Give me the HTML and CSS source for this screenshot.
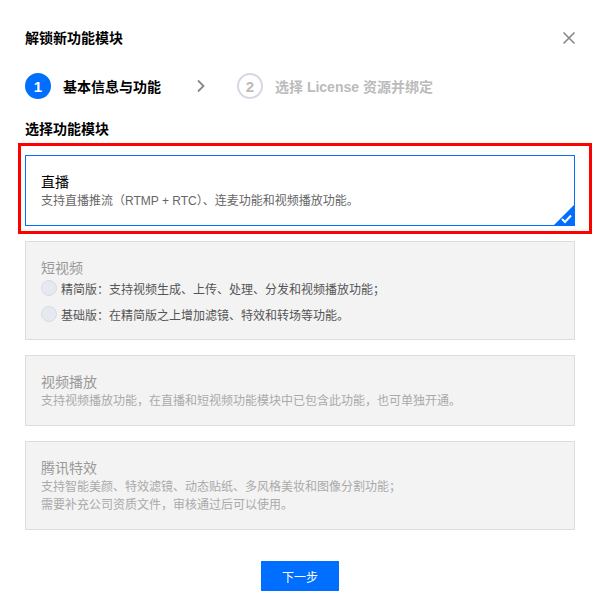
FILE: index.html
```html
<!DOCTYPE html>
<html lang="zh-CN">
<head>
    <meta charset="UTF-8">
    <meta name="viewport" content="width=device-width, initial-scale=1.0">
    <title>解锁新功能模块</title>
    <link rel="stylesheet" href="styles.css">
</head>
<body>
    <div class="dialog">
        <div class="dialog-header">
            <h3 class="dialog-title">解锁新功能模块</h3>
            <button class="close" aria-label="关闭">
                <svg width="14" height="14" viewBox="0 0 14 14">
                    <path d="M1.5 1.5 L12.5 12.5 M12.5 1.5 L1.5 12.5" stroke="#888" stroke-width="1.6" fill="none"/>
                </svg>
            </button>
        </div>

        <div class="steps">
            <div class="step current">
                <span class="step-num">1</span>
                <span class="step-label">基本信息与功能</span>
            </div>
            <svg class="step-arrow" width="10" height="14" viewBox="0 0 10 14">
                <path d="M2 1.5 L7.5 7 L2 12.5" stroke="#888" stroke-width="1.8" fill="none"/>
            </svg>
            <div class="step">
                <span class="step-num">2</span>
                <span class="step-label">选择 License 资源并绑定</span>
            </div>
        </div>

        <div class="section-label">选择功能模块</div>

        <div class="highlight">
            <div class="module selected">
                <div class="module-title">直播</div>
                <div class="module-desc">支持直播推流（RTMP + RTC）、连麦功能和视频播放功能。</div>
                <svg class="check" width="20" height="20" viewBox="0 0 20 20">
                    <path d="M20 0 L20 20 L0 20 Z" fill="#006eff"/>
                    <path d="M8 14 L11 17 L17 10.5" stroke="#fff" stroke-width="2" fill="none"/>
                </svg>
            </div>
        </div>

        <div class="module disabled">
            <div class="module-title">短视频</div>
            <label class="option"><span class="radio"></span>精简版：支持视频生成、上传、处理、分发和视频播放功能；</label>
            <label class="option"><span class="radio"></span>基础版：在精简版之上增加滤镜、特效和转场等功能。</label>
        </div>

        <div class="module disabled">
            <div class="module-title">视频播放</div>
            <div class="module-desc">支持视频播放功能，在直播和短视频功能模块中已包含此功能，也可单独开通。</div>
        </div>

        <div class="module disabled">
            <div class="module-title">腾讯特效</div>
            <div class="module-desc">支持智能美颜、特效滤镜、动态贴纸、多风格美妆和图像分割功能；<br>需要补充公司资质文件，审核通过后可以使用。</div>
        </div>

        <div class="footer">
            <button class="btn-primary">下一步</button>
        </div>
    </div>
</body>
</html>
```

FILE: styles.css
```css
body {
    margin: 0;
    background-color: #fff;
    font-family: "Liberation Sans", "Noto Sans CJK SC", sans-serif;
    color: #000;
}

.dialog {
    width: 550px;
    padding: 28px 25px 0;
}

.dialog-header {
    display: flex;
    justify-content: space-between;
    align-items: center;
    height: 20px;
}

.dialog-title {
    margin: 0;
    font-size: 14px;
    font-weight: bold;
    line-height: 20px;
}

.close {
    display: flex;
    padding: 0;
    margin-right: -1px;
    border: none;
    background: none;
    cursor: pointer;
}

.steps {
    display: flex;
    align-items: center;
    margin-top: 25px;
    height: 26px;
}

.step {
    display: flex;
    align-items: center;
    gap: 12px;
}

.step-num {
    box-sizing: border-box;
    width: 26px;
    height: 26px;
    border-radius: 50%;
    border: 2px solid #d4d9e2;
    display: flex;
    justify-content: center;
    align-items: center;
    font-size: 15px;
    font-weight: bold;
    color: #bbb;
}

.step.current .step-num {
    background-color: #006eff;
    border-color: #006eff;
    color: #fff;
}

.step-label {
    font-size: 14px;
    font-weight: bold;
    color: #bbb;
}

.step.current .step-label {
    color: #000;
}

.step-arrow {
    margin: 0 31px 0 35px;
}

.section-label {
    margin-top: 20px;
    font-size: 14px;
    font-weight: bold;
    line-height: 20px;
}

.highlight {
    margin: 4px 0 0 -7px;
    width: 559px;
    padding: 9px 5px 5px 4px;
    border: 3px solid #ff0000;
}

.module {
    position: relative;
    box-sizing: border-box;
    width: 550px;
    padding: 16px 15px 15px;
    border: 1px solid #ddd;
    background-color: #f3f3f3;
}

.module + .module {
    margin-top: 15px;
}

.highlight + .module {
    margin-top: 7px;
}

.module.selected {
    border-color: #006eff;
    background-color: #fff;
}

.module-title {
    font-size: 14px;
    line-height: 20px;
    color: #000;
}

.module-desc {
    font-size: 12px;
    line-height: 18px;
    color: #666;
}

.module.disabled .module-title {
    color: #999;
}

.module.disabled .module-desc {
    color: #aaa;
}

.check {
    position: absolute;
    right: 0;
    bottom: 0;
}

.option {
    display: flex;
    align-items: center;
    gap: 4px;
    height: 20px;
    font-size: 12px;
    color: #555;
}

.option + .option {
    margin-top: 6px;
}

.radio {
    box-sizing: border-box;
    width: 16px;
    height: 16px;
    border-radius: 50%;
    border: 1px solid #d7dbe2;
    background-color: #e6e9ef;
}

.footer {
    display: flex;
    justify-content: center;
    margin-top: 31px;
}

.btn-primary {
    width: 78px;
    height: 30px;
    border: none;
    background-color: #006eff;
    color: #fff;
    font-family: inherit;
    font-size: 12px;
    cursor: pointer;
}
```
